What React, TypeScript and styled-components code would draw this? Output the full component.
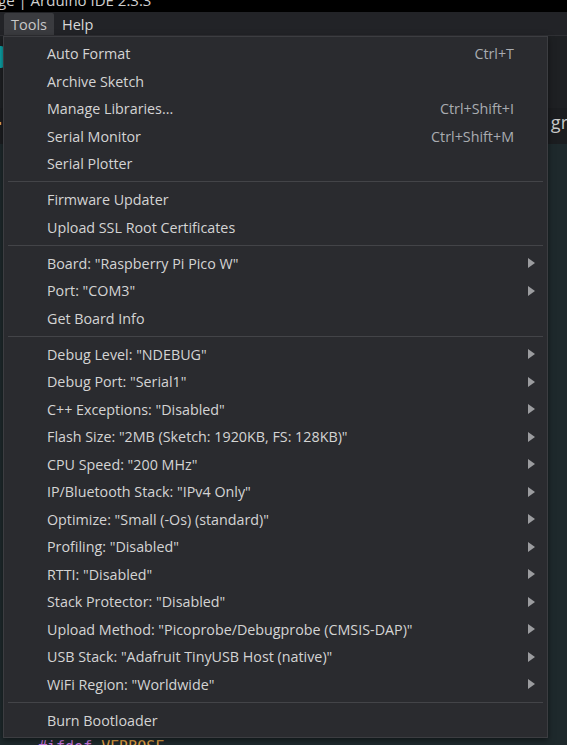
import React from "react";
import styled, { createGlobalStyle } from "styled-components";

const GlobalStyle = createGlobalStyle`
  html, body { margin: 0; padding: 0; background: #1c1e21; }
  * { box-sizing: border-box; }
`;

const Page = styled.div`
  position: relative;
  width: 567px;
  height: 745px;
  overflow: hidden;
  background: #1c1e21;
  font-family: "Open Sans", "Noto Sans", sans-serif;
  display: flex;
  flex-direction: column;
`;

const TitleBar = styled.div`
  height: 12px;
  background: #000;
  color: #d0d0d0;
  font-size: 15px;
  line-height: 12px;
  overflow: hidden;
  white-space: nowrap;
  & > span { display: block; margin-top: -6px; margin-left: -2px; }
`;

const MenuBar = styled.div`
  height: 24px;
  background: #222327;
  border-bottom: 1px solid #2f3034;
  display: flex;
  align-items: stretch;
  padding: 1px 0 0 4px;
  gap: 1px;
`;

const MenuTab = styled.div<{ $active?: boolean }>`
  padding: 0 7px;
  display: flex;
  align-items: center;
  font-size: 14.5px;
  color: ${(p) => (p.$active ? "#c8c8c8" : "#d8d8d8")};
  background: ${(p) => (p.$active ? "#3a3b3f" : "transparent")};
  border-radius: 2px 2px 0 0;
`;

const Workspace = styled.div`
  flex: 1;
  display: flex;
  flex-direction: column;
  background: #1f2124;
`;

const Toolbar = styled.div`
  height: 72px;
  background: #1e2023;
  display: flex;
  align-items: flex-start;
  padding: 10px 0 0 0;
`;

const TealButton = styled.div`
  width: 6px;
  height: 22px;
  margin-left: -2px;
  background: #0ca1a6;
  border-radius: 0 3px 3px 0;
`;

const TabStrip = styled.div`
  height: 36px;
  background: #1b1d20;
  display: flex;
  align-items: center;
  justify-content: space-between;
  font-size: 18px;
  color: #c9c9c9;
  padding: 0 0 8px 0;
`;

const TabMark = styled.span`
  color: #e5c07b;
  font-size: 12px;
  margin-left: -3px;
`;

const TabText = styled.span`
  margin-right: -1px;
`;

const Editor = styled.div`
  flex: 1;
  background: #1e292c;
  position: relative;
  display: flex;
  flex-direction: column;
  justify-content: flex-end;
  padding: 0 0 0 38px;
  font-family: "DejaVu Sans Mono", "Liberation Mono", monospace;
  font-size: 15px;
  line-height: 14px;
`;

const CodeLine = styled.div`
  margin-bottom: -9px;
  white-space: pre;
`;

const Purple = styled.span` color: #c678dd; `;
const Orange = styled.span` color: #e5a445; `;

const Dropdown = styled.div`
  position: absolute;
  left: 3px;
  top: 36px;
  width: 545px;
  height: 702px;
  background: #2a2b2f;
  border: 1px solid #3c3d41;
  box-shadow: 0 2px 6px rgba(0, 0, 0, 0.5);
  padding: 3px 0 0 0;
  display: flex;
  flex-direction: column;
`;

const Item = styled.div`
  height: 27.5px;
  flex: none;
  display: flex;
  align-items: center;
  padding: 0 12px 0 43px;
  font-size: 14.3px;
  color: #d4d4d4;
  white-space: nowrap;
`;

const Label = styled.span`
  flex: 1;
`;

const Shortcut = styled.span`
  color: #a9acb1;
  margin-right: 21px;
`;

const Arrow = styled.span`
  width: 0;
  height: 0;
  border-top: 5px solid transparent;
  border-bottom: 5px solid transparent;
  border-left: 7px solid #9b9c9f;
`;

const Separator = styled.div`
  flex: none;
  height: 8.5px;
  display: flex;
  align-items: center;
  padding: 0 4px;
  &::after {
    content: "";
    flex: 1;
    height: 1px;
    background: #434448;
  }
`;

type Entry = { label: string; shortcut?: string; sub?: boolean } | "sep";

const entries: Entry[] = [
  { label: "Auto Format", shortcut: "Ctrl+T" },
  { label: "Archive Sketch" },
  { label: "Manage Libraries...", shortcut: "Ctrl+Shift+I" },
  { label: "Serial Monitor", shortcut: "Ctrl+Shift+M" },
  { label: "Serial Plotter" },
  "sep",
  { label: "Firmware Updater" },
  { label: "Upload SSL Root Certificates" },
  "sep",
  { label: 'Board: "Raspberry Pi Pico W"', sub: true },
  { label: 'Port: "COM3"', sub: true },
  { label: "Get Board Info" },
  "sep",
  { label: 'Debug Level: "NDEBUG"', sub: true },
  { label: 'Debug Port: "Serial1"', sub: true },
  { label: 'C++ Exceptions: "Disabled"', sub: true },
  { label: 'Flash Size: "2MB (Sketch: 1920KB, FS: 128KB)"', sub: true },
  { label: 'CPU Speed: "200 MHz"', sub: true },
  { label: 'IP/Bluetooth Stack: "IPv4 Only"', sub: true },
  { label: 'Optimize: "Small (-Os) (standard)"', sub: true },
  { label: 'Profiling: "Disabled"', sub: true },
  { label: 'RTTI: "Disabled"', sub: true },
  { label: 'Stack Protector: "Disabled"', sub: true },
  { label: 'Upload Method: "Picoprobe/Debugprobe (CMSIS-DAP)"', sub: true },
  { label: 'USB Stack: "Adafruit TinyUSB Host (native)"', sub: true },
  { label: 'WiFi Region: "Worldwide"', sub: true },
  "sep",
  { label: "Burn Bootloader" },
];

export default function App() {
  return (
    <>
      <GlobalStyle />
      <Page>
        <TitleBar>
          <span>ge | Arduino IDE 2.3.3</span>
        </TitleBar>
        <MenuBar>
          <MenuTab $active>Tools</MenuTab>
          <MenuTab>Help</MenuTab>
        </MenuBar>
        <Workspace>
          <Toolbar>
            <TealButton />
          </Toolbar>
          <TabStrip>
            <TabMark>▪</TabMark>
            <TabText>gr</TabText>
          </TabStrip>
          <Editor>
            <CodeLine>
              <Purple>#ifdef</Purple> <Orange>VERBOSE</Orange>
            </CodeLine>
          </Editor>
        </Workspace>
        <Dropdown>
          {entries.map((e, i) =>
            e === "sep" ? (
              <Separator key={i} />
            ) : (
              <Item key={i}>
                <Label>{e.label}</Label>
                {e.shortcut && <Shortcut>{e.shortcut}</Shortcut>}
                {e.sub && <Arrow />}
              </Item>
            )
          )}
        </Dropdown>
      </Page>
    </>
  );
}
